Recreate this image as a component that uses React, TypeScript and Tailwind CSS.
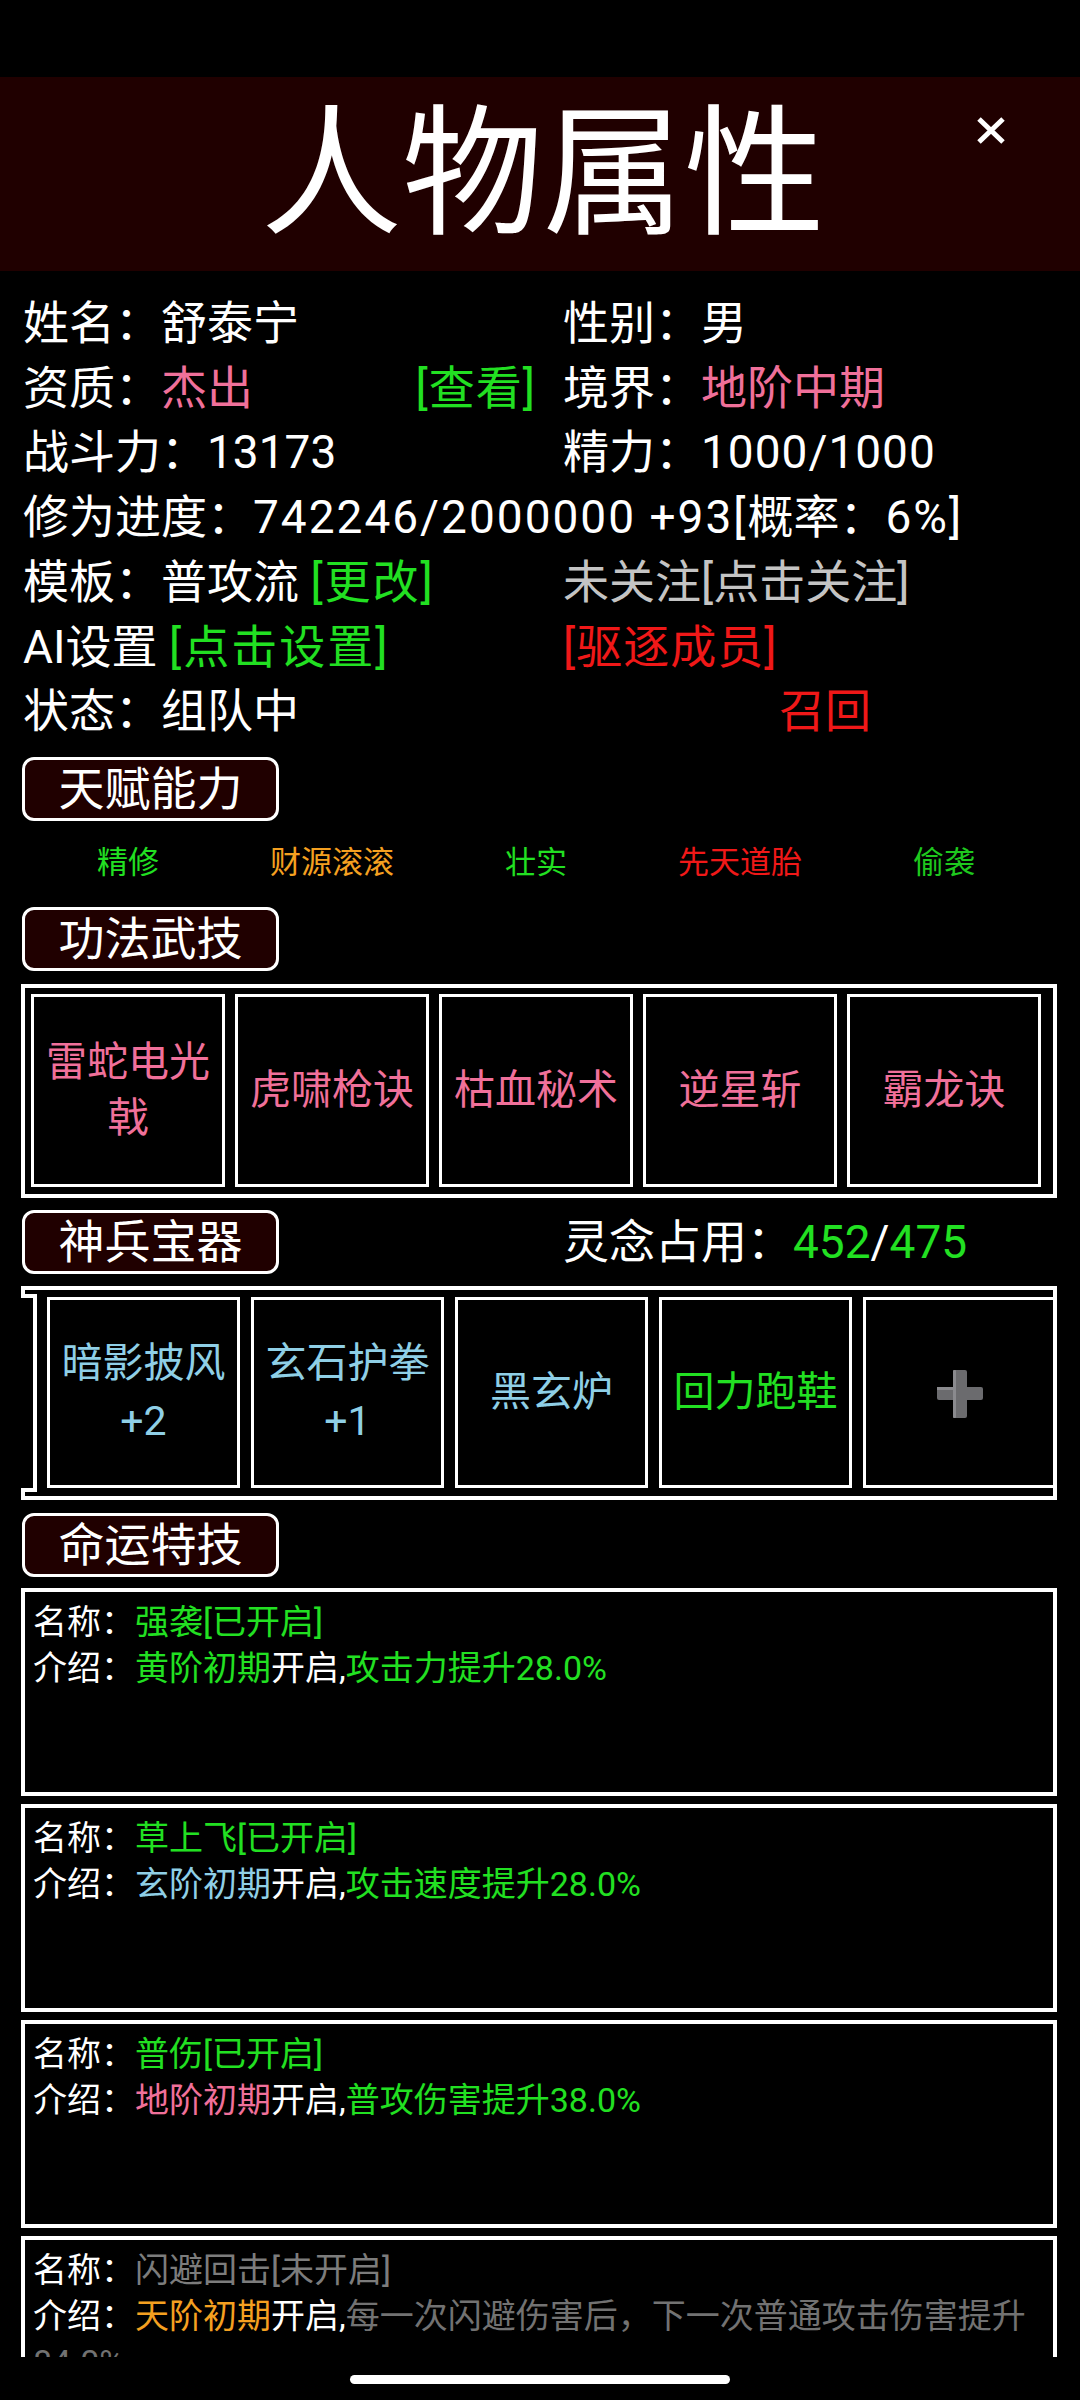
import React from "react";

const GREEN = "text-[#22e022]";
const PINK = "text-[#f0709a]";
const BLUE = "text-[#8fcfe6]";
const ORANGE = "text-[#f5a020]";
const RED = "text-[#f01818]";

function SectionTitle({ title }: { title: string }) {
  return (
    <div className="ml-[22px] w-[257px] h-[64px] shrink-0 rounded-[12px] border-[3px] border-white bg-[#200000] flex items-center justify-center text-[46px] leading-none text-white">
      {title}
    </div>
  );
}

function PlusIcon() {
  return (
    <svg width="46" height="48" viewBox="0 0 46 48">
      <rect x="16" y="0" width="14" height="48" rx="2" fill="#6b6b6e" />
      <rect x="0" y="17" width="46" height="13" rx="2" fill="#6b6b6e" />
      <rect x="16" y="0" width="3" height="48" rx="1" fill="#8a8a8e" />
      <rect x="0" y="17" width="16" height="3" fill="#8a8a8e" />
    </svg>
  );
}

const talents = [
  { name: "精修", color: GREEN },
  { name: "财源滚滚", color: ORANGE },
  { name: "壮实", color: GREEN },
  { name: "先天道胎", color: RED },
  { name: "偷袭", color: "text-[#1ec81e]" },
];

const skills = ["雷蛇电光戟", "虎啸枪诀", "枯血秘术", "逆星斩", "霸龙诀"];

const fates = [
  {
    name: "强袭[已开启]",
    nameColor: GREEN,
    stage: "黄阶初期",
    stageColor: GREEN,
    desc: "攻击力提升28.0%",
    descColor: GREEN,
  },
  {
    name: "草上飞[已开启]",
    nameColor: GREEN,
    stage: "玄阶初期",
    stageColor: BLUE,
    desc: "攻击速度提升28.0%",
    descColor: GREEN,
  },
  {
    name: "普伤[已开启]",
    nameColor: GREEN,
    stage: "地阶初期",
    stageColor: PINK,
    desc: "普攻伤害提升38.0%",
    descColor: GREEN,
  },
  {
    name: "闪避回击[未开启]",
    nameColor: "text-[#7c7c7c]",
    stage: "天阶初期",
    stageColor: ORANGE,
    desc: "每一次闪避伤害后，下一次普通攻击伤害提升84.0%",
    descColor: "text-[#727272]",
  },
];

export default function App() {
  return (
    <div className="w-[1080px] h-[2400px] bg-black flex flex-col overflow-hidden font-[Roboto,'Noto_Sans_CJK_SC',sans-serif] text-white">
      {/* status bar space */}
      <div className="h-[77px] shrink-0" />

      {/* header */}
      <div className="relative h-[194px] shrink-0 bg-[#200000] flex items-center justify-center">
        <span className="text-[141px] leading-none pl-[6px]">人物属性</span>
        <div className="absolute left-[976px] top-[39px] w-[30px] h-[29px]">
          <svg width="30" height="29" viewBox="0 0 30 29">
            <path d="M3 3 L27 26 M27 3 L3 26" stroke="white" strokeWidth="5" />
          </svg>
        </div>
      </div>

      {/* content */}
      <div className="flex-1 overflow-hidden">
        <div className="pt-[20px] pl-[23px] grid grid-cols-[513px_1fr] gap-x-[27px] text-[46px] leading-[64.7px] whitespace-nowrap">
          <div>姓名：舒泰宁</div>
          <div>性别：男</div>

          <div className="flex justify-between">
            <span>
              资质：<span className={PINK}>杰出</span>
            </span>
            <span className={`tracking-[1px] ${GREEN}`}>[查看]</span>
          </div>
          <div>
            境界：<span className={PINK}>地阶中期</span>
          </div>

          <div>战斗力：13173</div>
          <div>
            精力：<span className="tracking-[1px]">1000/1000</span>
          </div>

          <div className="col-span-2">
            修为进度：<span className="tracking-[2px]">742246/2000000 +93[</span>概率：
            <span className="tracking-[2px]">6%]</span>
          </div>

          <div>
            模板：普攻流 <span className={`tracking-[2px] ${GREEN}`}>[更改]</span>
          </div>
          <div className="text-[#c4c4c4]">未关注[点击关注]</div>

          <div>
            AI设置 <span className={`tracking-[2px] ${GREEN}`}>[点击设置]</span>
          </div>
          <div className={`tracking-[1px] ${RED}`}>[驱逐成员]</div>

          <div>状态：组队中</div>
          <div className={`pl-[216px] ${RED}`}>召回</div>
        </div>

        {/* 天赋能力 */}
        <div className="mt-[13px]">
          <SectionTitle title="天赋能力" />
        </div>
        <div className="mt-[17px] ml-[26px] w-[1020px] grid grid-cols-5 text-[31px] leading-[50px] text-center">
          {talents.map((t) => (
            <span key={t.name} className={t.color}>
              {t.name}
            </span>
          ))}
        </div>

        {/* 功法武技 */}
        <div className="mt-[19px]">
          <SectionTitle title="功法武技" />
        </div>
        <div className="mt-[13px] ml-[21px] w-[1036px] border-4 border-white pl-[6px] pt-[6px] pb-[7px] flex gap-[10px]">
          {skills.map((s) => (
            <div
              key={s}
              className={`w-[194px] h-[193px] shrink-0 border-[3px] border-white flex items-center justify-center text-center text-[41px] leading-[56px] px-[8px] ${PINK}`}
            >
              {s}
            </div>
          ))}
        </div>

        {/* 神兵宝器 */}
        <div className="mt-[12px] flex items-center">
          <SectionTitle title="神兵宝器" />
          <div className="ml-[284px] text-[46px] leading-none">
            灵念占用：<span className={GREEN}>452</span>/<span className={GREEN}>475</span>
          </div>
        </div>
        <div className="mt-[12px] ml-[21px] w-[1036px] h-[214px] border-y-4 border-r-4 border-white flex">
          <div className="w-[16px] shrink-0 flex flex-col">
            <div className="h-[8px] border-l-4 border-b-4 border-white" />
            <div className="flex-1 border-r-4 border-white" />
            <div className="h-[8px] border-l-4 border-t-4 border-white" />
          </div>
          <div className="flex-1 overflow-hidden ml-[10px] pt-[7px] flex gap-[11px]">
            <div className={`w-[193px] h-[191px] shrink-0 border-[3px] border-white flex flex-col items-center justify-center text-[41px] leading-[58px] ${BLUE}`}>
              <span>暗影披风</span>
              <span>+2</span>
            </div>
            <div className={`w-[193px] h-[191px] shrink-0 border-[3px] border-white flex flex-col items-center justify-center text-[41px] leading-[58px] ${BLUE}`}>
              <span>玄石护拳</span>
              <span>+1</span>
            </div>
            <div className={`w-[193px] h-[191px] shrink-0 border-[3px] border-white flex items-center justify-center text-[41px] ${BLUE}`}>
              黑玄炉
            </div>
            <div className={`w-[193px] h-[191px] shrink-0 border-[3px] border-white flex items-center justify-center text-[41px] ${GREEN}`}>
              回力跑鞋
            </div>
            <div className="w-[193px] h-[191px] shrink-0 border-[3px] border-white flex items-center justify-center pt-[4px]">
              <PlusIcon />
            </div>
          </div>
        </div>

        {/* 命运特技 */}
        <div className="mt-[13px]">
          <SectionTitle title="命运特技" />
        </div>
        <div className="mt-[11px] ml-[21px] w-[1036px] flex flex-col gap-[8px]">
          {fates.map((f) => (
            <div
              key={f.name}
              className="h-[208px] shrink-0 overflow-hidden border-4 border-white px-[8px] pt-[7px] text-[34px] leading-[46px]"
            >
              <div>
                名称：<span className={f.nameColor}>{f.name}</span>
              </div>
              <div>
                介绍：<span className={f.stageColor}>{f.stage}</span>开启,
                <span className={f.descColor}>{f.desc}</span>
              </div>
            </div>
          ))}
        </div>
      </div>

      {/* home indicator */}
      <div className="h-[43px] shrink-0 pt-[18px]">
        <div className="mx-auto w-[380px] h-[9px] rounded-full bg-white" />
      </div>
    </div>
  );
}
